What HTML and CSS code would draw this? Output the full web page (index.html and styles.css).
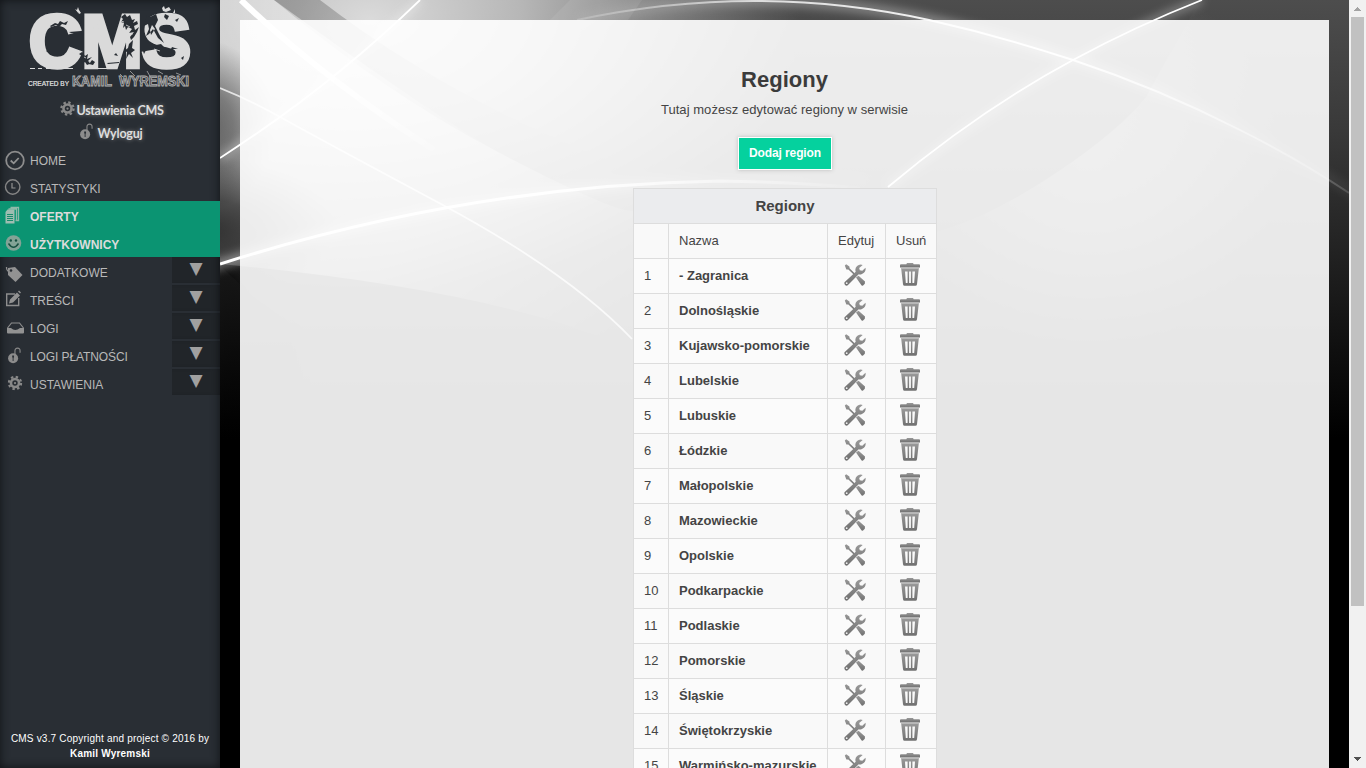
FILE: index.html
```html
<!DOCTYPE html>
<html lang="pl">
<head>
<meta charset="utf-8">
<title>CMS - Regiony</title>
<link rel="stylesheet" href="styles.css">
</head>
<body>
<svg class="sprites" width="0" height="0" aria-hidden="true">
  <defs>
    <linearGradient id="metal" x1="0" y1="0" x2="0" y2="1"><stop offset="0" stop-color="#999"/><stop offset="1" stop-color="#707070"/></linearGradient>
    <symbol id="tools" viewBox="0 0 22 22">
      <g fill="url(#metal)">
        <path d="M.8 1.400 2.200.2 5.400 2.400 5.600 4.300 12 10.700 11 11.700 4.400 5.600 2.400 5.400Z"/>
        <path d="M12 13.500 14.500 11.800 21 17.500 20.800 19.700 18.800 21.800 17.600 21.500Z"/>
        <path d="M18.700.9A5.400 5.400 0 0 0 11.700 7.700L.5 18.300Q0 20 1.300 21.200 2.800 22.200 4 21L14.700 10.200A5.500 5.500 0 0 0 21.500 3.700L18.300 6.700 15.800 6.200 15.200 4Z"/>
      </g>
      <circle cx="2.700" cy="19.200" r=".9" fill="#eee"/>
    </symbol>
    <symbol id="trash" viewBox="0 0 20 23">
      <path fill="url(#metal)" d="M0 2Q0 1.300 1 1.300H6.300L7 0H13L13.700 1.300H19Q20 1.300 20 2V4.400H0Z"/>
      <path fill="#b5b5b5" d="M1 4.400H19V5.800H1Z"/>
      <path fill="url(#metal)" fill-rule="evenodd" d="M1.200 5.800H18.800L17 21.200Q16.800 22.700 15.400 22.700H4.600Q3.200 22.700 3 21.200ZM5 8.500 5.800 20H7.600V8.500ZM9.100 8.500V20H10.900V8.500ZM12.400 8.500V20H14.200L15 8.500Z"/>
    </symbol>
    <symbol id="gear" viewBox="0 0 16 16">
      <circle cx="8" cy="8" r="6.500" fill="none" stroke="#888" stroke-width="2.400" stroke-dasharray="2.550 2.550"/>
      <circle cx="8" cy="8" r="4.300" fill="none" stroke="#888" stroke-width="2.800"/>
      <circle cx="8" cy="8" r="1.200" fill="#888"/>
    </symbol>
    <symbol id="lock" viewBox="0 0 14 18">
      <path d="M7.500 8V4Q7.500 1 10.300 1T13 4V6" fill="none" stroke="#888" stroke-width="1.200"/>
      <circle cx="5.500" cy="12" r="5.400" fill="#8c8c8c"/>
      <path d="M4.500 9H6.500V11L6 11.500V15H5V11.500L4.500 11Z" fill="#292e34"/>
    </symbol>
  </defs>
</svg>

<aside class="sidebar">
  <svg class="logo" width="220" height="96" viewBox="0 0 220 96">
    <text class="logo-letters" x="29" y="66.500" textLength="162" lengthAdjust="spacingAndGlyphs">CMS</text>
    <path fill="#dadada" d="M75 9l2 1 1-3 1 3 2 3-2 1zM162 8l2-2 1 3 4-2 2 3-5 2-3-1zM173 13l2-4v4zM30 68h5v1h-5zM38 68h4v1h-4zM46 68h5v1h-5zM58 68h15v1H58zM94 68h20v1H94zM127 68h11v1h-11zM76 30l5-1v3l-5 1z"/>
    <g fill="#292e34">
      <path d="M50 26l5-3 3 1 2-3 4 2 4-2-2 4-4-1-3 3-3-2-5 2zM69 32l12-1v2l-10 0zM46 51l4-2-1 4zM82 52l3 4 3-2-1 5 5-2-4 4 4 2-5 2-2-3-4 2 1-5-3 1 3-4-3-2zM92 60l3 2-2 3-4-1zM107 63l12-1v1l-11 1z"/>
      <path d="M121 17l4-3 2 3 3-2 2 5 3-1-2 4 4-2 1 3-4 2 1 4 4-3-2 5-3 5-3 3-1-3 4-5-5 1 3-4-4-2-2 3-1-4-2 2 1-5-3-1 2-3zM129 44l4-4-1 8 3 2-4 3 2 5-4-4-3 5 1-7-3-1 4-3z"/>
      <path d="M147 15l3 2 6-3 2 6-3 6 4 8 5 9-6-5-5-9-4 5-3 2 3-7-1-5-4 2zM152 25l-2 5 1 5 4-6zM165 14l4 2-2 4-3-3zM175 20l4-2-2 4zM151 43l5 2 5-1 4 4-7-1-5 1zM172 47l6 2-7 0zM181 58l3-2-1 4zM143 51l3-1-2 4z"/>
      <path d="M78 12l2 8 2-3-1 7-3-6zM112 23l3 2-4 0zM116 53l2 3-4-1z"/>
    </g>
    <path d="M84 57l2 1m3 3 1 2m31-42 3 1m2 3 4 2m-2 6 5 1m29-15 2 3m-10 27 6 2" stroke="#dadada" stroke-width=".8"/>
    <text class="logo-by" x="28" y="86" textLength="41" lengthAdjust="spacingAndGlyphs">CREATED BY</text>
    <g class="logo-author">
      <text x="72" y="86" textLength="40" lengthAdjust="spacingAndGlyphs">KAMIL</text>
      <text x="119" y="86" textLength="70" lengthAdjust="spacingAndGlyphs">WYREMSKI</text>
    </g>
    <path d="M73 84l5 1m4-8 4 1m34-4 3 3m7-6 5 5m4 4 3 4m5-13 4 7m7-7 5 3m5 4 6 5m2-10 5 2" stroke="#aaa" stroke-width=".8"/>
  </svg>

  <div class="account">
    <a class="account-link"><svg width="15" height="15"><use href="#gear"/></svg><span class="settings-text">Ustawienia CMS</span></a>
    <a class="account-link logout"><svg width="13" height="17"><use href="#lock"/></svg><span>Wyloguj</span></a>
  </div>

  <nav class="menu">
    <a class="item"><svg class="ico" width="30" height="28"><circle cx="15" cy="15.500" r="8.800" fill="none" stroke="#8d8d8d" stroke-width="1.800"/><path d="M10.700 15.500l3 2.800 5-5.300" fill="none" stroke="#929292" stroke-width="1.800"/></svg><span>HOME</span></a>
    <a class="item"><svg class="ico" width="30" height="28"><circle cx="12.700" cy="14" r="7.200" fill="none" stroke="#858585" stroke-width="1.400"/><path d="M12 10v5h3.500" fill="none" stroke="#929292" stroke-width="1.200"/></svg><span class="tight">STATYSTYKI</span></a>
    <a class="item active"><svg class="ico" width="30" height="28"><path d="M10.500 6.500h8v13h-3M8.500 8h8v12" fill="none" stroke="#8fb9a9" stroke-width="1.300"/><path d="M5.500 11l2-2.500h7v14h-9z" fill="#9ebdb1"/><path d="M7 13.500h6M7 15.500h6M7 17.500h6M7 19.500h6" stroke="#188c6c"/></svg><span>OFERTY</span></a>
    <a class="item active"><svg class="ico" width="30" height="28"><circle cx="13.500" cy="14" r="7.800" fill="#83a396"/><circle cx="10.800" cy="11.500" r="1.200" fill="#174f40"/><circle cx="16" cy="11.500" r="1.200" fill="#174f40"/><path d="M8.500 14.500q5 7.500 10 0" fill="none" stroke="#174f40" stroke-width="1.400"/></svg><span>UŻYTKOWNICY</span></a>
    <a class="item"><svg class="ico" width="30" height="28"><path d="M8 11l7-1 7.500 8-7 7L8 18z" fill="#929292"/><path d="M12 15q-6 0-5.500-5" fill="none" stroke="#8d8d8d" stroke-width="1.300"/><circle cx="11" cy="13.500" r="1.300" fill="#292e34"/></svg><span>DODATKOWE</span><b class="more">▼</b></a>
    <a class="item"><svg class="ico" width="30" height="28"><path d="M15 9H6.700v11.500h12V13" fill="none" stroke="#8d8d8d" stroke-width="1.400"/><path d="M9 18.500l1-4 7-7 3 3-7 7zM18 6.500l1-1 2 2-1 1z" fill="#929292"/></svg><span>TREŚCI</span><b class="more">▼</b></a>
    <a class="item"><svg class="ico" width="30" height="28"><path d="M7.500 15l4-5h8l4 5" fill="none" stroke="#8d8d8d" stroke-width="1.200"/><path d="M7 15h4q4 4 9 0h4v4.500q0 1-1 1H8q-1 0-1-1z" fill="#929292"/></svg><span>LOGI</span><b class="more">▼</b></a>
    <a class="item"><svg class="ico" width="30" height="28"><use href="#lock" x="8" y="6" width="13" height="17"/></svg><span class="tight">LOGI PŁATNOŚCI</span><b class="more">▼</b></a>
    <a class="item"><svg class="ico" width="30" height="28"><use href="#gear" x="7.500" y="6.500" width="15" height="15"/></svg><span>USTAWIENIA</span><b class="more">▼</b></a>
  </nav>

  <footer class="copyright"><span class="line">CMS v3.7 Copyright and project © 2016 by</span><br><b>Kamil Wyremski</b></footer>
</aside>

<main class="main">
  <svg class="backdrop" viewBox="220 0 1129 768" preserveAspectRatio="none" aria-hidden="true">
    <defs>
      <linearGradient id="fall" x1="0" y1="0" x2="0" y2="1"><stop offset="0" stop-color="#4d4d4d"/><stop offset=".17" stop-color="#393939"/><stop offset=".3" stop-color="#262626"/><stop offset=".45" stop-color="#101010"/><stop offset=".57" stop-color="#000"/></linearGradient>
      <radialGradient id="bloom"><stop offset="0" stop-color="#fff" stop-opacity=".8"/><stop offset=".35" stop-color="#fff" stop-opacity=".6"/><stop offset="1" stop-color="#fff" stop-opacity="0"/></radialGradient>
      <radialGradient id="dark"><stop offset="0" stop-color="#000" stop-opacity=".65"/><stop offset=".4" stop-color="#000" stop-opacity=".5"/><stop offset="1" stop-color="#000" stop-opacity="0"/></radialGradient>
      <linearGradient id="sweep" gradientUnits="userSpaceOnUse" x1="270" y1="20" x2="600" y2="340"><stop offset="0" stop-color="#fff" stop-opacity=".42"/><stop offset=".55" stop-color="#fff" stop-opacity=".3"/><stop offset="1" stop-color="#fff" stop-opacity="0"/></linearGradient>
      <linearGradient id="band" gradientUnits="userSpaceOnUse" x1="300" y1="0" x2="600" y2="190"><stop offset="0" stop-opacity=".22"/><stop offset=".5" stop-opacity=".1"/><stop offset="1" stop-opacity="0"/></linearGradient>
      <radialGradient id="veil" gradientUnits="userSpaceOnUse" cx="1090" cy="160" r="190"><stop offset="0" stop-color="#fff" stop-opacity=".2"/><stop offset=".4" stop-color="#fff" stop-opacity=".14"/><stop offset="1" stop-color="#fff" stop-opacity="0"/></radialGradient>
      <linearGradient id="corner" x1="0" y1="0" x2="0" y2="1"><stop offset="0" stop-color="#181818" stop-opacity=".9"/><stop offset="1" stop-color="#000" stop-opacity=".6"/></linearGradient>
      <linearGradient id="tail" gradientUnits="userSpaceOnUse" x1="570" y1="0" x2="1349" y2="0"><stop offset="0" stop-color="#fff" stop-opacity=".15"/><stop offset=".25" stop-color="#fff" stop-opacity=".75"/><stop offset=".6" stop-color="#fff"/><stop offset=".8" stop-color="#fff" stop-opacity=".55"/><stop offset="1" stop-color="#fff" stop-opacity=".15"/></linearGradient>
      <linearGradient id="arc" gradientUnits="userSpaceOnUse" x1="220" y1="0" x2="880" y2="0"><stop offset="0" stop-color="#fff"/><stop offset=".5" stop-color="#fff"/><stop offset="1" stop-color="#fff" stop-opacity="0"/></linearGradient>
      <linearGradient id="thick" gradientUnits="userSpaceOnUse" x1="241" y1="0" x2="450" y2="160"><stop offset=".3" stop-color="#fff"/><stop offset="1" stop-color="#fff" stop-opacity="0"/></linearGradient>
      <filter id="mid" filterUnits="userSpaceOnUse" x="150" y="-60" width="1260" height="600"><feGaussianBlur stdDeviation="5"/></filter>
    </defs>
    <rect x="220" width="1129" height="768" fill="url(#fall)"/>
    <ellipse cx="370" cy="20" rx="430" ry="270" fill="url(#bloom)"/>
    <path d="M220 0H274Q385 93 498 152T632 211Q720 242 790 240L700 350H632Q500 290 220 264Z" fill="url(#sweep)"/>
    <path d="M274 0H320Q450 100 620 165L632 211Q565 190 498 152T274 0Z" fill="url(#band)"/>
    <path d="M570 0H642L628 20H550Z" fill="#fff" opacity=".08"/>
    <path d="M1146 97Q1120 130 1056 173T937 232L800 270V400H1320V0H1200Z" fill="url(#veil)"/>
    <ellipse cx="205" cy="125" rx="70" ry="85" fill="url(#dark)" opacity=".75"/>
    <ellipse cx="205" cy="228" rx="130" ry="72" fill="url(#dark)"/>
    <path d="M220 264L300 340V440H220Z" fill="#000" opacity=".4" filter="url(#mid)"/>
    <path d="M220 266L240 284V440H220Z" fill="url(#corner)"/>
    <g fill="none" stroke="#fff">
      <g filter="url(#mid)" stroke-width="10" opacity=".38">
        <path d="M200 270L220 264Q470 185 720 181T860 188" stroke="url(#arc)"/>
        <path d="M577 20Q755 -18 929 20T1240 130 1349 193" stroke="url(#tail)"/>
        <path d="M1202 0Q1136 26 1073 60T888 187M420 0Q330 87 220 158" stroke-width="6"/>
      </g>
      <path d="M241 0Q320 76 434 150" stroke="url(#thick)" stroke-width="6"/>
      <path d="M220 264Q470 185 720 181 800 182 860 188" stroke="url(#arc)" stroke-width="3"/>
      <path d="M220 88Q250 100 282 118T441 204 632 339" stroke-width="1.800" opacity=".75"/>
      <path d="M420 0Q330 87 220 158" stroke-width="1.800"/>
      <path d="M577 20Q755 -18 929 20 1000 36 1073 60 1160 89 1240 130 1300 160 1349 193" stroke="url(#tail)" stroke-width="1.900"/>
      <path d="M1202 0Q1136 26 1073 60 980 110 888 187" stroke-width="1.700"/>
    </g>
  </svg>

  <section class="panel">
    <h1 class="title">Regiony</h1>
    <p class="lead">Tutaj możesz edytować regiony w serwisie</p>
    <a class="button">Dodaj region</a>
    <table class="regions">
      <colgroup><col class="c-num"><col class="c-name"><col class="c-edit"><col class="c-del"></colgroup>
      <thead>
        <tr class="caption"><th colspan="4">Regiony</th></tr>
        <tr class="alt"><td></td><td>Nazwa</td><td>Edytuj</td><td>Usuń</td></tr>
      </thead>
      <tbody>
        <tr><td>1</td><td class="name">- Zagranica</td><td class="act"><svg width="22" height="22"><use href="#tools"/></svg></td><td class="act"><svg width="20" height="23"><use href="#trash"/></svg></td></tr>
        <tr><td>2</td><td class="name">Dolnośląskie</td><td class="act"><svg width="22" height="22"><use href="#tools"/></svg></td><td class="act"><svg width="20" height="23"><use href="#trash"/></svg></td></tr>
        <tr><td>3</td><td class="name">Kujawsko-pomorskie</td><td class="act"><svg width="22" height="22"><use href="#tools"/></svg></td><td class="act"><svg width="20" height="23"><use href="#trash"/></svg></td></tr>
        <tr><td>4</td><td class="name">Lubelskie</td><td class="act"><svg width="22" height="22"><use href="#tools"/></svg></td><td class="act"><svg width="20" height="23"><use href="#trash"/></svg></td></tr>
        <tr><td>5</td><td class="name">Lubuskie</td><td class="act"><svg width="22" height="22"><use href="#tools"/></svg></td><td class="act"><svg width="20" height="23"><use href="#trash"/></svg></td></tr>
        <tr><td>6</td><td class="name">Łódzkie</td><td class="act"><svg width="22" height="22"><use href="#tools"/></svg></td><td class="act"><svg width="20" height="23"><use href="#trash"/></svg></td></tr>
        <tr><td>7</td><td class="name">Małopolskie</td><td class="act"><svg width="22" height="22"><use href="#tools"/></svg></td><td class="act"><svg width="20" height="23"><use href="#trash"/></svg></td></tr>
        <tr><td>8</td><td class="name">Mazowieckie</td><td class="act"><svg width="22" height="22"><use href="#tools"/></svg></td><td class="act"><svg width="20" height="23"><use href="#trash"/></svg></td></tr>
        <tr><td>9</td><td class="name">Opolskie</td><td class="act"><svg width="22" height="22"><use href="#tools"/></svg></td><td class="act"><svg width="20" height="23"><use href="#trash"/></svg></td></tr>
        <tr><td>10</td><td class="name">Podkarpackie</td><td class="act"><svg width="22" height="22"><use href="#tools"/></svg></td><td class="act"><svg width="20" height="23"><use href="#trash"/></svg></td></tr>
        <tr><td>11</td><td class="name">Podlaskie</td><td class="act"><svg width="22" height="22"><use href="#tools"/></svg></td><td class="act"><svg width="20" height="23"><use href="#trash"/></svg></td></tr>
        <tr><td>12</td><td class="name">Pomorskie</td><td class="act"><svg width="22" height="22"><use href="#tools"/></svg></td><td class="act"><svg width="20" height="23"><use href="#trash"/></svg></td></tr>
        <tr><td>13</td><td class="name">Śląskie</td><td class="act"><svg width="22" height="22"><use href="#tools"/></svg></td><td class="act"><svg width="20" height="23"><use href="#trash"/></svg></td></tr>
        <tr><td>14</td><td class="name">Świętokrzyskie</td><td class="act"><svg width="22" height="22"><use href="#tools"/></svg></td><td class="act"><svg width="20" height="23"><use href="#trash"/></svg></td></tr>
        <tr><td>15</td><td class="name">Warmińsko-mazurskie</td><td class="act"><svg width="22" height="22"><use href="#tools"/></svg></td><td class="act"><svg width="20" height="23"><use href="#trash"/></svg></td></tr>
      </tbody>
    </table>
  </section>
</main>

<div class="scrollbar">
  <svg width="17" height="17"><path d="M5 11h7v-1h-1V9h-1V8H9V7H8v1H7v1H6v1H5z" fill="#a3a3a3"/></svg>
  <div class="thumb"></div>
  <svg class="down" width="17" height="17"><path d="M5 6h7v1h-1v1h-1v1H9v1H8V9H7V8H6V7H5z" fill="#505050"/></svg>
</div>
</body>
</html>
```

FILE: styles.css
```css
* { box-sizing: border-box; }
html, body { height: 100%; margin: 0; overflow: hidden; }
body {
  display: flex;
  background: #000;
  color: #444;
  font: 13px/15px "Liberation Sans", Arial, sans-serif;
}
.sprites { position: absolute; }

.sidebar {
  display: flex;
  flex-direction: column;
  width: 220px;
  height: 768px;
  flex: none;
  background: #292e34;
  box-shadow: inset 0 0 10px #101316;
}
.logo { display: block; flex: none; overflow: visible; }
.logo-letters { font: bold 74px "Liberation Sans", Arial, sans-serif; fill: #dadada; stroke: #dadada; stroke-width: 4.5; }
.logo-by { font: 7.5px "Liberation Sans", Arial, sans-serif; fill: #e6e6e6; stroke: #e6e6e6; stroke-width: .2; }
.logo-author { font: bold 14px "Liberation Sans", Arial, sans-serif; fill: #414549; stroke: #b0b0b0; stroke-width: .9; }

.account { height: 49px; padding-top: 2px; flex: none; }
.account-link {
  display: flex;
  justify-content: center;
  align-items: center;
  gap: 2px;
  height: 23px;
  padding-left: 3px;
  font: bold 12.5px/20px Lato, sans-serif;
  color: #dcdcdc;
  text-shadow: 0 0 4px #888;
}
.account-link span { padding-top: 2px; }
.settings-text { letter-spacing: -.35px; }
.account-link svg { margin-bottom: 3px; }
.logout { gap: 4px; letter-spacing: -.2px; }

.menu { flex: none; }
.item {
  display: flex;
  height: 28px;
  padding-top: 2px;
  font-size: 12px;
  line-height: 28px;
  color: #b9b9b9;
}
.item .ico { flex: none; margin-top: -2px; }
.tight { letter-spacing: -.1px; }
.active {
  background: #0b9472;
  color: #dcdcdc;
  font-weight: bold;
}
.more {
  width: 48px;
  height: 26px;
  margin: -2px 0 0 auto;
  background: #212529;
  box-shadow: inset -6px 0 6px -5px #101316;
  color: #a0a0a0;
  font: 17px/23px "DejaVu Sans", sans-serif;
  text-align: center;
}
.copyright {
  margin-top: auto;
  padding-bottom: 7px;
  font-size: 10px;
  line-height: 15px;
  letter-spacing: .2px;
  color: #fff;
  text-align: center;
  white-space: nowrap;
}

.main {
  position: relative;
  z-index: 0;
  flex: 1;
  height: 768px;
  padding: 20px 20px 0;
  overflow: hidden;
}
.backdrop { position: absolute; inset: 0; width: 100%; height: 100%; z-index: -1; }
.panel {
  display: flex;
  flex-direction: column;
  align-items: center;
  height: 900px;
  padding: 46px 0 0;
  background: rgba(255, 255, 255, .9);
}
.title { margin: 0; font-size: 22px; line-height: 28px; color: #3b3b3b; }
.lead { margin: 8px 0 20px; letter-spacing: .05px; }
.button {
  height: 33px;
  margin: 0 0 18px 1px;
  padding: 0 10px;
  border: 1px solid #fff;
  background: #05d19e;
  box-shadow: 0 0 4px #bbb;
  color: #fff;
  font-size: 12px;
  font-weight: bold;
  letter-spacing: -.1px;
  line-height: 30px;
}

.regions {
  width: 304px;
  margin-left: 1px;
  flex: none;
  table-layout: fixed;
  border-collapse: collapse;
  background: rgba(255, 255, 255, .82);
}
.c-num { width: 35px; }
.c-name { width: 159px; }
.c-edit { width: 58px; }
.c-del { width: 51px; }
.regions tr { height: 35px; }
.regions th, .regions td { padding: 0 0 2px 10px; border: 1px solid #ddd; text-align: left; white-space: nowrap; }
.regions .caption th { padding: 0 0 2px; background: #ebecee; font-size: 15px; text-align: center; }
.alt, .regions tbody tr:nth-child(even) { background: #f9f9f9; }
.regions .name { font-weight: bold; }
.regions .act { padding: 0; text-align: center; vertical-align: middle; }
.act svg { display: block; margin: -2px auto 0; }
.act:last-child svg { margin-top: -3px; margin-left: 14px; }
.act:nth-child(3) svg { margin-left: 16px; }

.scrollbar {
  display: flex;
  flex-direction: column;
  width: 17px;
  height: 768px;
  flex: none;
  background: #f1f1f1;
}
.thumb { width: 13px; height: 589px; margin-left: 2px; background: #c1c1c1; }
.down { margin-top: auto; }
```
